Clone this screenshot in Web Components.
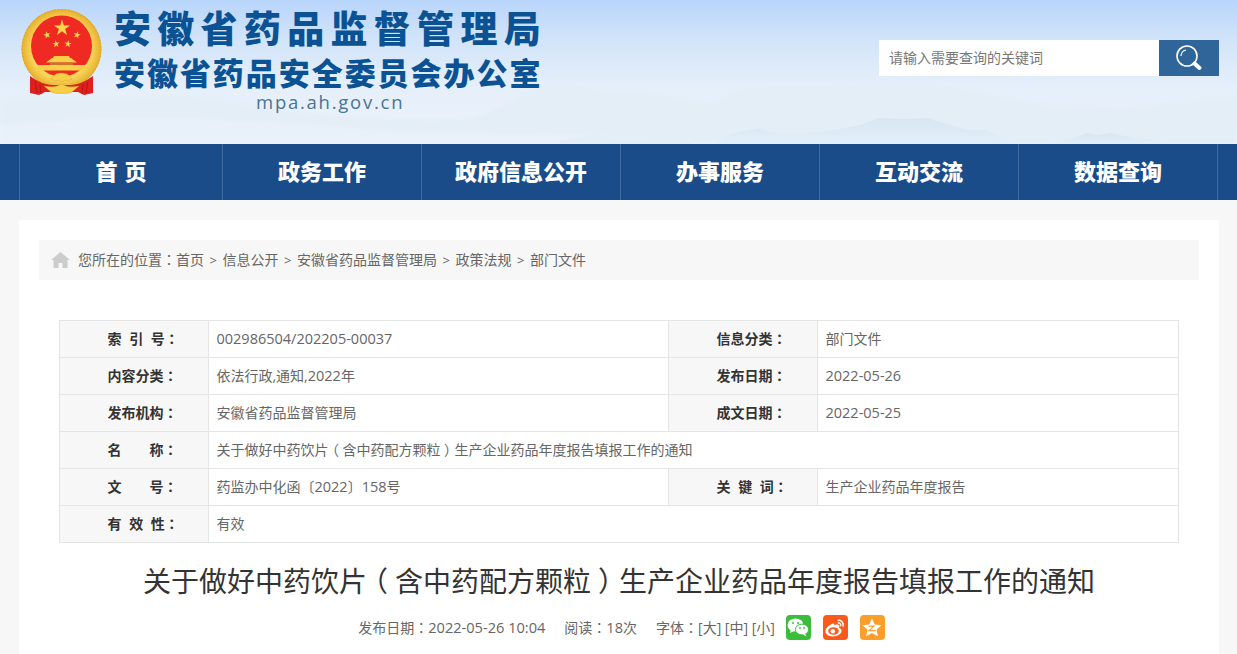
<!DOCTYPE html>
<html lang="zh-CN"><head><meta charset="utf-8"><title>安徽省药品监督管理局</title>
<style>
html,body{margin:0;padding:0;height:654px;overflow:hidden;background:#f7f7f7}
body{font-family:"Open Sans","Noto Sans CJK SC",sans-serif;font-size:14px;color:#666}
</style></head><body>
<site-header></site-header>
<main-nav>
  <nav-item>首&nbsp;页</nav-item><nav-item>政务工作</nav-item><nav-item>政府信息公开</nav-item><nav-item>办事服务</nav-item><nav-item>互动交流</nav-item><nav-item>数据查询</nav-item>
</main-nav>
<page-card>
  <bread-crumb><span>首页</span><span>信息公开</span><span>安徽省药品监督管理局</span><span>政策法规</span><span>部门文件</span></bread-crumb>
  <info-table></info-table>
  <article-head title-text="关于做好中药饮片（含中药配方颗粒）生产企业药品年度报告填报工作的通知"></article-head>
</page-card>
<script>
const def=(n,html)=>customElements.define(n,class extends HTMLElement{constructor(){super();this.attachShadow({mode:'open'}).innerHTML=typeof html==='function'?html(this):html}});
const star=(cx,cy,r,rot=0,fill='#fbd64a')=>{let p=[];for(let i=0;i<10;i++){const a=(-90+rot+i*36)*Math.PI/180,R=i%2?r*.38:r;p.push((cx+R*Math.cos(a)).toFixed(1)+','+(cy+R*Math.sin(a)).toFixed(1))}return `<polygon points="${p.join(' ')}" fill="${fill}"/>`};
const emblem=`<svg viewBox="0 0 105 105" width="105" height="105" aria-hidden="true">
<defs><radialGradient id="g" cx=".5" cy=".5" r=".5"><stop offset=".75" stop-color="#f9d65c"/><stop offset="1" stop-color="#e6ae2a"/></radialGradient></defs>
<circle cx="51.500" cy="49" r="40" fill="url(#g)"/>
<circle cx="51.500" cy="49" r="39.500" fill="none" stroke="#d9a22a" stroke-width="1" stroke-dasharray="1.500 2"/>
<path d="M20 76C27 81 35 85 43 85H60C68 85 76 81 83 76L83 93 74 95 68 92H35L29 95 20 93Z" fill="#e0201e"/>
<path d="M25 81l2 12M30 84l1 10M78 81l-2 12M73 84l-1 10" stroke="#b81715" stroke-width="1"/>
<circle cx="51.500" cy="46" r="30.500" fill="#ee2a22"/>
${star(52,28,8.500,0)}${star(37,35,3.900,-15)}${star(67,35,3.900,15)}${star(46,44,3.900,-8)}${star(58,44,3.900,8)}
<path d="M44 56h15l1 2H43z" fill="#f7cd45"/><path d="M42 58h19l6 4.500H36z" fill="#f9d04c"/><rect x="40" y="62.500" width="23" height="2.500" fill="#c9782a"/>
<rect x="28" y="65" width="47" height="5.500" fill="#f9cf49"/>
<path d="M41 79c2-4 6-6 10.500-6s8.500 2 10.500 6l-4 2-3-1-3.500 2-3.500-2-3 1z" fill="#f7cf46" stroke="#cf9a2c" stroke-width=".4"/>
<path d="M34 86c7 1.500 12 1 17.500-2 5.500 3 10.500 3.500 17.500 2l-7 6c-4 2-17 2-21 0z" fill="#f7cf46" stroke="#cf9a2c" stroke-width=".4"/>
</svg>`;
const mtn=`<svg viewBox="0 0 1237 144" width="1237" height="144" aria-hidden="true">
<defs><filter id="b"><feGaussianBlur stdDeviation=".7"/></filter><filter id="c"><feGaussianBlur stdDeviation="2"/></filter>
<linearGradient id="m" x1="0" y1="0" x2="0" y2="1"><stop offset="0" stop-color="#d8e6f3"/><stop offset="1" stop-color="#e3eff8"/></linearGradient></defs>
<g filter="url(#c)">
<path d="M0 100C60 96 110 100 178 95 210 97 235 102 255 106 320 116 400 122 470 118 500 112 535 84 560 82L580 86 616 93 646 93 680 98 707 104 746 87 800 86 850 85 905 83 945 86 979 92 1040 104 1120 108 1237 96V144H0Z" fill="#e4eef7"/>
<path d="M0 125C120 112 260 120 380 130 470 136 560 128 720 144H0Z" fill="#e8f1f9"/>
</g>
<g filter="url(#b)">
<path d="M715 144L733 133 759 128 772 133 800 134 819 132 845 128 860 125 879 118 905 119 927 118 950 125 970 130 987 130 1000 137 1013 144Z" fill="url(#m)"/>
<path d="M1048 144L1069 140 1087 133 1098 135 1110 133 1134 138 1150 139 1164 144Z" fill="url(#m)"/>
<path d="M560 140L595 135 638 140 672 136 692 144H560Z" fill="#e3eef7"/>
</g></svg>`;
def('site-header',`<style>
:host{display:flex;position:relative;height:144px;box-sizing:border-box;padding-left:10px;background:linear-gradient(#b8d5fb 0,#d2e4f9 40px,#e5effa 85px,#ecf3fb 144px);overflow:hidden}
.bg{position:absolute;inset:0;z-index:0}.bg svg{display:block}
.logo{position:relative;z-index:1;flex:none;height:105px;width:104px}.logo svg{display:block}
.names{position:relative;z-index:1;flex:none;width:440px;padding-top:5px;font-family:"Noto Sans CJK SC",sans-serif;font-weight:900;color:#0a5294;white-space:nowrap}
.a{font-size:37px;line-height:45px;letter-spacing:6.300px}
.b{font-size:31px;line-height:43px;letter-spacing:1.950px}
.c{font:400 18.500px/18px "Open Sans",sans-serif;letter-spacing:1.750px;color:#4b7394;padding-left:142px}
.s{position:relative;z-index:1;margin-left:auto;margin-right:18px;margin-top:40px;display:flex;height:36px}
.q{width:270px;padding-left:10px;background:#fff;line-height:35px;height:36px;font-size:14px;color:#777;font-family:"Noto Sans CJK SC",sans-serif}
.btn{width:60px;background:#2f6598;display:flex;align-items:center;justify-content:center}
</style>
<div class="bg">${mtn}</div>
<div class="logo">${emblem}</div>
<div class="names"><div class="a">安徽省药品监督管理局</div><div class="b">安徽省药品安全委员会办公室</div><div class="c">mpa.ah.gov.cn</div></div>
<div class="s"><div class="q">请输入需要查询的关键词</div><div class="btn"><svg width="28" height="28" viewBox="0 0 28 28" aria-hidden="true"><circle cx="12" cy="12" r="10" fill="none" stroke="#fff" stroke-width="1.600"/><path d="M6 12a6.500 6.500 0 0 1 5-6" fill="none" stroke="#fff" stroke-width="1.200"/><path d="M19.500 19.500l5 4.500" stroke="#fff" stroke-width="4" stroke-linecap="round"/></svg></div></div>`);
def('main-nav',`<style>:host{display:flex;height:56px;background:#1a4c8a;padding-left:19px}
::slotted(nav-item:first-child){width:204px;border-left:1px solid #406ca0}</style><slot></slot>`);
def('nav-item',`<style>:host{display:flex;align-items:center;justify-content:center;box-sizing:border-box;width:199px;height:56px;padding-bottom:4px;border-right:1px solid #406ca0;color:#fff;font:900 22px/30px "Noto Sans CJK SC",sans-serif;word-spacing:2px}</style><slot></slot>`);
def('page-card',`<style>:host{display:block;margin:20px 18px 0 19px;height:434px;padding:20px;box-sizing:border-box;background:#fff;overflow:hidden}</style><slot></slot>`);
const c='<span lang="zh-TW" style="font-family:\'Noto Sans CJK TC\',sans-serif">：</span>';
const n=(s,z=14.5)=>s.replace(/[0-9][0-9\-\/:.]*(?: [0-9:]+)?/g,m=>`<span style="font-size:${z}px">${m}</span>`);
const par=s=>s.replace(/[（）]/g,m=>`<span style="font-family:'Noto Sans CJK SC',sans-serif;font-feature-settings:'halt';margin:0 .25em">${m}</span>`);
def('bread-crumb',el=>{const items=[...el.children].map(x=>x.textContent);return `<style>
:host{display:flex;align-items:center;height:40px;box-sizing:border-box;padding:0 0 2px 12px;background:#f7f7f7;color:#666;font:14px "Open Sans","Noto Sans CJK SC",sans-serif;white-space:nowrap}
svg{flex:none;margin:2px 8px 0 0}.g{display:inline-block;width:18.500px;text-align:center;font-size:13px}
</style><svg width="19" height="16" viewBox="0 0 19 16" aria-hidden="true"><path d="M9.500 0L19 8h-2.500v8H11.500v-5h-4v5H2.500V8H0z" fill="#ccc"/></svg><span>您所在的位置${c}${items.join('<span class="g">&gt;</span>')}</span>`});
def('info-cell',`<style>:host{display:flex;align-items:center;box-sizing:border-box;height:37px;padding:0 0 2px 7.500px;border-right:1px solid #e5e5e5;border-bottom:1px solid #e5e5e5;font-size:14px;color:#666;white-space:nowrap;overflow:hidden}:host([k]){background:#f7f7f7;padding-left:47.500px;color:#333;font-weight:700;word-spacing:4px}:host([wide]){grid-column:span 3}</style><slot></slot>`);
const rows=[['索 引 号','002986504/202205-00037','信息分类','部门文件'],['内容分类','依法行政,通知,2022年','发布日期','2022-05-26'],['发布机构','安徽省药品监督管理局','成文日期','2022-05-25'],['名　　称','关于做好中药饮片（含中药配方颗粒）生产企业药品年度报告填报工作的通知'],['文　　号','药监办中化函〔2022〕158号','关 键 词','生产企业药品年度报告'],['有 效 性','有效']];
const cell=s=>`<info-cell><span>${par(n(s))}</span></info-cell>`;
def('info-table',`<style>:host{display:grid;grid-template-columns:149px 460px 149px 361px;margin:40px 0 0 20px;border-left:1px solid #e5e5e5;border-top:1px solid #e5e5e5;box-sizing:border-box;width:1120px}</style>`+rows.map(r=>{
 let h=`<info-cell k><span>${r[0]}${c}</span></info-cell>`;
 if(r.length==2)return h+`<info-cell wide><span>${par(n(r[1]))}</span></info-cell>`;
 return h+cell(r[1])+`<info-cell k><span>${r[2]}${c}</span></info-cell>`+cell(r[3])}).join(''));
def('article-head',el=>`<style>:host{display:block;text-align:center}
h1{margin:18px 0 0;font:400 28px/38px "Noto Sans CJK SC",sans-serif;color:#333;white-space:nowrap}
.m{display:flex;align-items:center;justify-content:center;margin-top:16px;padding-left:5px;height:25px;font-size:14px;color:#666;white-space:nowrap}
.m span.t{margin-right:19px;padding-bottom:2px}.m span.l{margin-right:11px;padding-bottom:2px}
a{display:flex;align-items:center;justify-content:center;width:25px;height:25px;border-radius:4px;margin-right:12px}a:last-child{margin-right:0}
</style><h1>${par(el.getAttribute('title-text'))}</h1><div class="m"><span class="t">发布日期${c}${n('2022-05-26 10:04',14.6)}</span><span class="t">阅读${c}${n('18',14.6)}次</span><span class="l">字体${c}[大] [中] [小]</span>
<a style="background:#3bbd3b"><svg width="22" height="19" viewBox="0 0 22 19"><ellipse cx="8.500" cy="7" rx="8" ry="6.600" fill="#fff"/><path d="M4 11l-1 4 4-2z" fill="#fff"/><ellipse cx="15" cy="11.500" rx="6.600" ry="5.400" fill="#fff" stroke="#3bbd3b"/><path d="M18 15.500l1.500 3-3.500-2z" fill="#fff"/><circle cx="6" cy="5" r="1" fill="#3bbd3b"/><circle cx="11" cy="5" r="1" fill="#3bbd3b"/><circle cx="13" cy="10" r=".9" fill="#3bbd3b"/><circle cx="17" cy="10" r=".9" fill="#3bbd3b"/></svg></a>
<a style="background:#fb5a1c"><svg width="22" height="20" viewBox="0 0 22 20"><path d="M9 5.500C4 7.500 1 11 1.500 14c.6 3 4.500 5 9 4.300 4.500-.7 7.500-3.300 7-6-.3-1.500-1.500-2-2.500-2.300.8-2 .2-3-1-3.300-1.500-.3-3 .3-3.700.8.300-1 0-2.500-1.800-2z" fill="#fff"/><ellipse cx="9.500" cy="13" rx="5.300" ry="3.800" fill="#fb5a1c"/><circle cx="8.800" cy="13.200" r="2.300" fill="#fff"/><path d="M14 2.500c3-.7 6 2 5 5.500M14.500 5c1.500-.3 2.500 1 2 2.500" fill="none" stroke="#fff" stroke-width="1.500" stroke-linecap="round"/></svg></a>
<a style="background:#fb9f2a"><svg width="20" height="19" viewBox="0 0 20 19"><path d="M10 .5l2.800 6 6.700.7-5 4.500 1.400 6.600-5.900-3.300-5.900 3.300 1.400-6.600-5-4.500 6.700-.7z" fill="#fff"/><path d="M6.500 7.500h7l-5 4.500h5l.5 1.200H5.500l5-4.500h-4z" fill="#fb9f2a"/></svg></a></div>`);
</script>
</body></html>
